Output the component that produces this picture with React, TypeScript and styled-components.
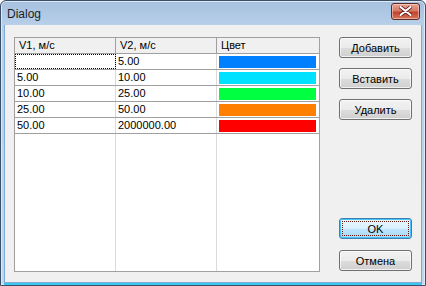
import styled, { createGlobalStyle } from "styled-components";

const ROWS = [
  { v1: "", v2: "5.00", color: "#0080ff" },
  { v1: "5.00", v2: "10.00", color: "#00e1ff" },
  { v1: "10.00", v2: "25.00", color: "#00ff40" },
  { v1: "25.00", v2: "50.00", color: "#ff8000" },
  { v1: "50.00", v2: "2000000.00", color: "#ff0000" },
];

const GlobalStyle = createGlobalStyle`
  html, body {
    margin: 0;
    padding: 0;
    background: #ffffff;
  }
  body {
    width: 426px;
    height: 286px;
    overflow: hidden;
    font-family: "Liberation Sans", Arial, sans-serif;
  }
`;

const App = () => {
  return (
    <>
      <GlobalStyle />
      <Window>
        <TitleBar>
          <Title>Dialog</Title>
          <CloseButton>
            <svg width="13" height="10" viewBox="0 0 13 10">
              <path
                d="M1.5 1 L11.5 9 M11.5 1 L1.5 9"
                stroke="#5a1a12"
                strokeWidth="3.6"
                strokeLinecap="round"
              />
              <path
                d="M1.5 1 L11.5 9 M11.5 1 L1.5 9"
                stroke="#ffffff"
                strokeWidth="2.2"
                strokeLinecap="round"
              />
            </svg>
          </CloseButton>
        </TitleBar>
        <Client>
          <Grid>
            <HeaderRow>
              <HeaderCell>V1, м/с</HeaderCell>
              <HeaderCell>V2, м/с</HeaderCell>
              <HeaderCell $last>Цвет</HeaderCell>
            </HeaderRow>
            {ROWS.map((row, i) => (
              <DataRow key={i}>
                <Cell $focus={i === 0}>{row.v1}</Cell>
                <Cell>{row.v2}</Cell>
                <ColorCell>
                  <ColorBar $color={row.color} />
                </ColorCell>
              </DataRow>
            ))}
            <EmptyRow>
              <EmptyCell />
              <EmptyCell />
              <EmptyCell $last />
            </EmptyRow>
          </Grid>
          <ButtonColumn>
            <ButtonGroup>
              <Button>Добавить</Button>
              <Button>Вставить</Button>
              <Button>Удалить</Button>
            </ButtonGroup>
            <BottomGroup>
              <Button $default>
                <FocusText>OK</FocusText>
              </Button>
              <Button>Отмена</Button>
            </BottomGroup>
          </ButtonColumn>
        </Client>
      </Window>
    </>
  );
};

const Window = styled.div`
  width: 426px;
  height: 286px;
  box-sizing: border-box;
  display: flex;
  flex-direction: column;
  border: 1px solid #3b4f66;
  border-radius: 6px 6px 0 0;
  background: linear-gradient(#a6c0de 0px, #b7cfe9 24px, #c0d6ee 100%);
  padding: 0 3px 2px 3px;
  box-shadow: inset 0 0 0 1px #dce9f6;
`;

const TitleBar = styled.div`
  height: 24px;
  flex: none;
  display: flex;
  align-items: center;
  justify-content: space-between;
  padding: 0 2px 0 3px;
`;

const Title = styled.span`
  font-family: "Liberation Sans", Arial, sans-serif;
  font-size: 12px;
  color: #1e1e1e;
  margin-top: 1px;
`;

const CloseButton = styled.div`
  width: 29px;
  height: 17px;
  box-sizing: border-box;
  margin-top: -4px;
  display: flex;
  align-items: center;
  justify-content: center;
  border: 1px solid #5a2a26;
  border-radius: 3px;
  background: linear-gradient(#e8a493 0%, #d47a66 45%, #c2432d 55%, #d2755c 100%);
  box-shadow: inset 0 0 0 1px rgba(255, 220, 210, 0.55);
`;

const Client = styled.div`
  flex: 1;
  display: flex;
  gap: 19px;
  background: #f0f0f0;
  border: 1px solid #7eaad6;
  border-top: none;
  padding: 12px 8px 9px 9px;
  box-shadow: 0 2px 0 #3ec7f0;
`;

const Grid = styled.div`
  width: 306px;
  height: 235px;
  box-sizing: border-box;
  border: 1px solid #a0a0a0;
  background: #ffffff;
  display: flex;
  flex-direction: column;
`;

const Row = styled.div`
  display: grid;
  grid-template-columns: 101px 101px 1fr;
`;

const HeaderRow = styled(Row)`
  height: 15px;
  background: #f0f0f0;
  border-bottom: 1px solid #a0a0a0;
`;

const HeaderCell = styled.div<{ $last?: boolean }>`
  font-size: 11px;
  line-height: 15px;
  color: #000000;
  padding-left: 4px;
  border-right: ${(p) => (p.$last ? "none" : "1px solid #a0a0a0")};
  white-space: nowrap;
`;

const DataRow = styled(Row)`
  height: 15px;
  border-bottom: 1px solid #a0a0a0;
`;

const Cell = styled.div<{ $focus?: boolean }>`
  font-size: 11px;
  line-height: 15px;
  color: #000000;
  padding-left: 2px;
  box-sizing: border-box;
  border-right: 1px solid #dadada;
  outline: ${(p) => (p.$focus ? "1px dotted #000000" : "none")};
  outline-offset: -1px;
  white-space: nowrap;
`;

const ColorCell = styled.div`
  display: flex;
  align-items: center;
  padding: 0 3px 0 2px;
`;

const ColorBar = styled.div<{ $color: string }>`
  flex: 1;
  height: 12px;
  background: ${(p) => p.$color};
`;

const EmptyRow = styled(Row)`
  flex: 1;
`;

const EmptyCell = styled.div<{ $last?: boolean }>`
  border-right: ${(p) => (p.$last ? "none" : "1px solid #dadada")};
`;

const ButtonColumn = styled.div`
  width: 73px;
  display: flex;
  flex-direction: column;
  justify-content: space-between;
  padding-bottom: 2px;
`;

const ButtonGroup = styled.div`
  display: flex;
  flex-direction: column;
  gap: 10px;
`;

const BottomGroup = styled.div`
  display: flex;
  flex-direction: column;
  gap: 11px;
`;

const Button = styled.div<{ $default?: boolean }>`
  height: 21px;
  box-sizing: border-box;
  display: flex;
  align-items: center;
  justify-content: center;
  font-size: 11px;
  color: #000000;
  border-radius: 3px;
  border: 1px solid ${(p) => (p.$default ? "#3c7fb1" : "#707070")};
  background: ${(p) =>
    p.$default
      ? "linear-gradient(#eaf6fd 0%, #d9f0fc 50%, #bee6fd 51%, #a7d9f5 100%)"
      : "linear-gradient(#f2f2f2 0%, #ebebeb 50%, #dddddd 51%, #cfcfcf 100%)"};
  box-shadow: ${(p) =>
    p.$default
      ? "inset 0 0 0 1px #48c2f7"
      : "inset 0 0 0 1px rgba(255,255,255,0.7)"};
  padding: 2px;
`;

const FocusText = styled.div`
  flex: 1;
  align-self: stretch;
  display: flex;
  align-items: center;
  justify-content: center;
  border: 1px dotted #6b1a12;
`;

export default App;
